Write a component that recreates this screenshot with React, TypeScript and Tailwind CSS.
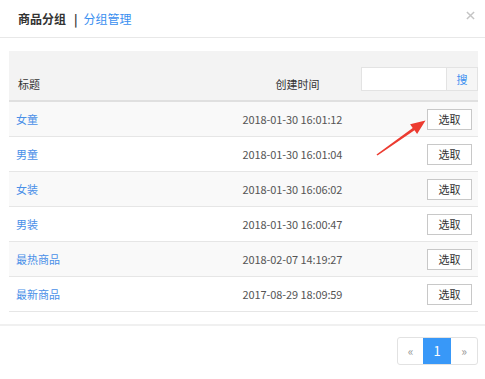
const rows = [
  { name: "女童", time: "2018-01-30 16:01:12" },
  { name: "男童", time: "2018-01-30 16:01:04" },
  { name: "女装", time: "2018-01-30 16:06:02" },
  { name: "男装", time: "2018-01-30 16:00:47" },
  { name: "最热商品", time: "2018-02-07 14:19:27" },
  { name: "最新商品", time: "2017-08-29 18:09:59" },
];

export default function App() {
  return (
    <div
      className="relative w-[485px] h-[379px] bg-white text-[11px] text-[#333] overflow-hidden"
      style={{ fontFamily: '"Noto Sans CJK SC", "Noto Sans", sans-serif' }}
    >
      {/* header */}
      <div className="h-[38px] border-b border-[#e8e8e8] flex items-center pl-[18px] pr-[10px]">
        <span className="text-[12px] font-bold text-[#333]">商品分组</span>
        <span className="text-[12px] font-bold text-[#333] ml-[8px] mr-[6px]">|</span>
        <span className="text-[12px] text-[#3a8ff0]">分组管理</span>
        <svg className="ml-auto w-[9px] h-[9px] mt-[-6px]" viewBox="0 0 10 10">
          <path d="M1 1 9 9M9 1 1 9" stroke="#c4c4c4" strokeWidth="1.6" />
        </svg>
      </div>

      <div className="pt-[13px] pl-[9px] pr-[7px]">
        {/* table head */}
        <div className="h-[51px] bg-[#f3f3f3] border-b-2 border-[#e0e0e0] flex items-end pb-[8px]">
          <div className="w-[200px] pl-[9px] leading-[16px]">标题</div>
          <div className="w-[167px] text-center leading-[16px] pl-[34px]">创建时间</div>
          <div className="flex-1 flex justify-end mb-[1px]">
            <div className="w-[86px] h-[24px] bg-white border border-[#e3e3e3]" />
            <div className="w-[31px] h-[24px] border border-l-0 border-[#e3e3e3] bg-[#f6f6f6] flex items-center justify-center text-[#3a8ff0]">
              搜
            </div>
          </div>
        </div>

        {/* table body */}
        {rows.map((r, i) => (
          <div
            key={r.name}
            className={
              "h-[35px] border-b border-[#e6e6e6] flex items-center " +
              (i % 2 === 0 ? "bg-[#f9f9f9]" : "bg-white")
            }
          >
            <div className="w-[200px] pl-[7px] text-[#4a90e8]">{r.name}</div>
            <div className="w-[167px] text-center text-[#555] tracking-[-0.1px]">{r.time}</div>
            <div className="flex-1 flex justify-end pr-[6px]">
              <button className="w-[45px] h-[21px] border border-[#c8c8c8] bg-white text-[11px] text-[#333] flex items-center justify-center">
                选取
              </button>
            </div>
          </div>
        ))}
      </div>

      {/* footer */}
      <div className="mt-[12px] border-t-2 border-[#f0f0f0] flex justify-end pr-[7px] pt-[11px]">
        <div className="flex h-[28px] border border-[#e2e2e2] rounded-[3px] overflow-hidden">
          <div className="w-[25px] flex items-center justify-center text-[#999] text-[12px]">«</div>
          <div className="w-[28px] flex items-center justify-center bg-[#3898f8] text-white text-[13px]">1</div>
          <div className="w-[26px] flex items-center justify-center text-[#999] text-[12px]">»</div>
        </div>
      </div>

      {/* annotation arrow */}
      <svg className="absolute inset-0 pointer-events-none" width="485" height="379">
        <polygon
          points="376.5,154.4 412.7,127.9 410.1,124.2 425.5,120.5 417.1,134 414.5,130.3 377.5,155.6"
          fill="#ec3b30"
        />
      </svg>
    </div>
  );
}
